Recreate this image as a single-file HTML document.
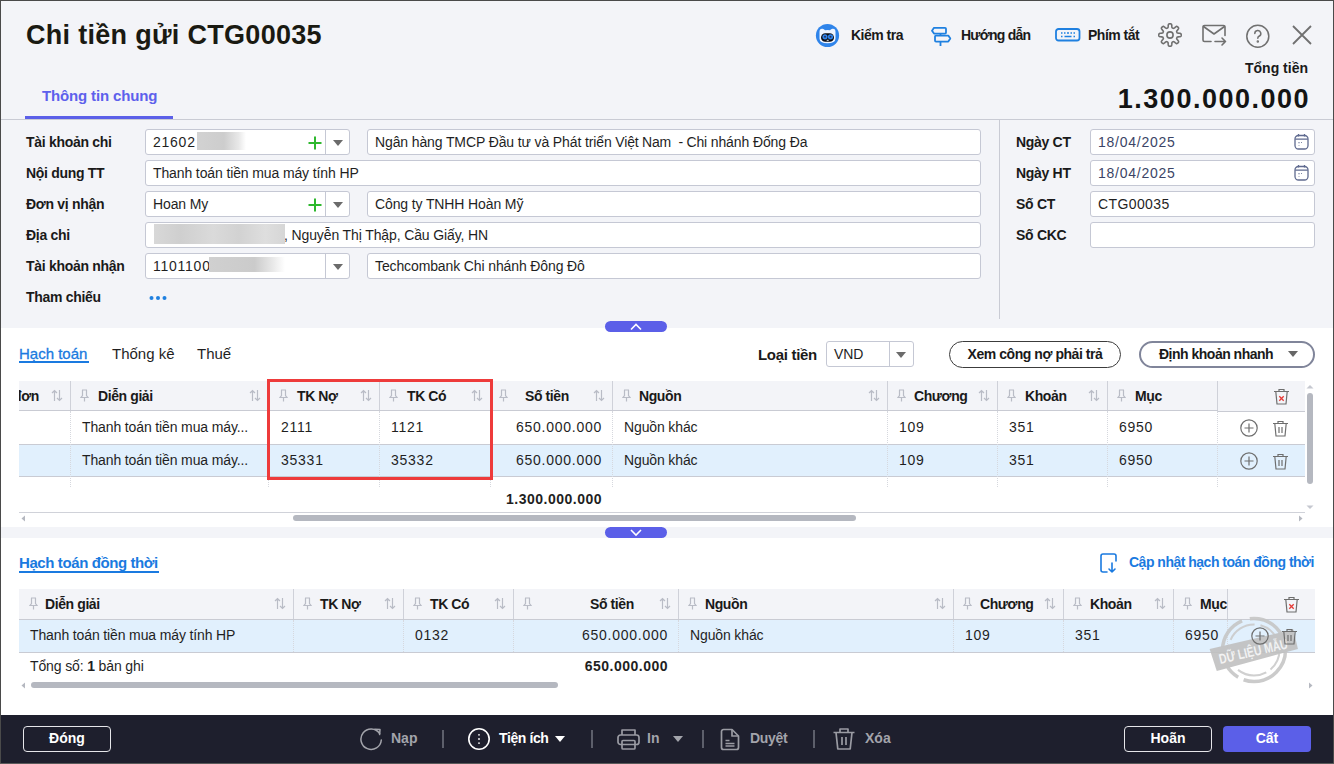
<!DOCTYPE html>
<html><head><meta charset="utf-8">
<style>
*{box-sizing:border-box;margin:0;padding:0}
html,body{width:1334px;height:764px;overflow:hidden;background:#fff}
body{font-family:"Liberation Sans",sans-serif;color:#1c1c1c;position:relative;font-size:14px}
.a{position:absolute;white-space:nowrap}
.b{font-weight:bold}
.inp{position:absolute;background:#fff;border:1px solid #c5c8d4;border-radius:3px;height:26px}
.it{position:absolute;top:4px;left:7px;font-size:14px;letter-spacing:-.12px;color:#1f1f1f;white-space:nowrap}
.lbl{position:absolute;font-weight:bold;font-size:14px;letter-spacing:-.3px;color:#1a1a1a;white-space:nowrap}
.tri{position:absolute;width:0;height:0;border-left:5px solid transparent;border-right:5px solid transparent;border-top:6px solid #6b6b6b}
.hd{position:absolute;font-weight:bold;font-size:14px;letter-spacing:-.4px;color:#1a1a1a;white-space:nowrap}
.cell{position:absolute;font-size:14px;letter-spacing:-.13px;color:#1f1f1f;white-space:nowrap}
.vsep{position:absolute;width:1px;background:#cfd1d9}
.dsep{position:absolute;width:0;border-left:1px dotted #d6d8de}
.hsep{position:absolute;height:1px;background:#c9cbd3}
</style></head>
<body>
<!-- window background -->
<div class="a" style="left:0;top:0;width:1334px;height:328px;background:#f3f4f8"></div>
<div class="a" style="left:0;top:527px;width:1334px;height:11px;background:#f3f4f8"></div>
<!-- footer -->
<div class="a" style="left:0;top:715px;width:1334px;height:49px;background:#1e1f2d"></div>

<!-- borders -->
<div class="a" style="left:0;top:0;width:1334px;height:1px;background:#4a4a4a"></div>
<div class="a" style="left:0;top:0;width:1px;height:764px;background:#4a4a4a"></div>
<div class="a" style="left:1333px;top:0;width:1px;height:764px;background:#4a4a4a"></div>
<div class="a" style="left:0;top:763px;width:1334px;height:1px;background:#5a5a5a"></div>

<!-- HEADER -->
<div class="a b" style="left:26px;top:20px;font-size:27px;color:#1a1a12;letter-spacing:.3px">Chi tiền gửi CTG00035</div>


<!-- header icons -->
<svg class="a" style="left:815px;top:23px" width="25" height="25" viewBox="0 0 25 25">
 <circle cx="12.5" cy="12.5" r="11.6" fill="#2f84ea"/>
 <path d="M4.5 9 Q4.5 5.5 7.5 5.8 Q9 6 10 7.2 Q12.5 6.6 15 7.2 Q16 6 17.5 5.8 Q20.5 5.5 20.5 9 L20.5 15.5 Q20.5 20.3 12.5 20.3 Q4.5 20.3 4.5 15.5 Z" fill="#eef4ff"/>
 <rect x="6" y="10.2" width="13" height="8.6" rx="4.3" fill="#0b0d14"/>
 <circle cx="10" cy="13.8" r="2.6" fill="#2f84ea"/><circle cx="15.5" cy="13.8" r="2.6" fill="#2f84ea"/>
 <circle cx="10" cy="13.8" r="1" fill="#2a2f5a"/><circle cx="15.5" cy="13.8" r="1" fill="#2a2f5a"/>
 <rect x="11.7" y="16.8" width="2" height="1" fill="#dfe8f5"/>
</svg>
<div class="a b" style="left:851px;top:27px;font-size:14px;color:#1a1a1a;letter-spacing:-0.5px">Kiểm tra</div>
<svg class="a" style="left:931px;top:26px" width="21" height="21" viewBox="0 0 21 21" fill="none" stroke="#1f80e0" stroke-width="1.8" stroke-linejoin="round">
 <path d="M3 1.8 H14 a1 1 0 0 1 1 1 V6.6 a1 1 0 0 1 -1 1 H3 L1 4.7 Z"/><path d="M5 9.6 H17.3 L19.3 12.6 L17.3 15.6 H5 a1 1 0 0 1 -1 -1 V10.6 a1 1 0 0 1 1 -1 Z"/><path d="M9.5 7.6 V9.6 M9.5 15.6 V20"/>
</svg>
<div class="a b" style="left:961px;top:27px;font-size:14px;color:#1a1a1a;letter-spacing:-0.75px">Hướng dẫn</div>
<svg class="a" style="left:1055px;top:28px" width="26" height="14" viewBox="0 0 26 14" fill="none">
 <rect x="1" y="1" width="23.5" height="11.5" rx="2.5" stroke="#1f80e0" stroke-width="1.8"/>
 <path d="M6 5h1.5M9 5h1.5M12 5h2M15.5 5h1.5M18.5 5h1.5M6 8.5h1.5M9.5 8.5h7M18.5 8.5h1.5" stroke="#1f80e0" stroke-width="1.4"/>
</svg>
<div class="a b" style="left:1088px;top:27px;font-size:14px;color:#1a1a1a;letter-spacing:-0.5px">Phím tắt</div>
<svg class="a" style="left:1158px;top:23px" width="24" height="24" viewBox="0 0 24 24" fill="none" stroke="#6f6f6f" stroke-width="1.6" stroke-linejoin="round"><path d="M12.00 0.80 L12.35 0.81 L12.70 0.86 L13.04 0.95 L13.37 1.18 L13.63 1.68 L13.79 2.60 L13.86 3.67 L13.96 4.38 L14.11 4.73 L14.31 4.90 L14.51 5.02 L14.72 5.12 L14.94 5.21 L15.16 5.29 L15.39 5.35 L15.65 5.36 L16.01 5.22 L16.58 4.79 L17.38 4.09 L18.14 3.54 L18.69 3.38 L19.07 3.45 L19.38 3.62 L19.66 3.84 L19.92 4.08 L20.16 4.34 L20.38 4.62 L20.55 4.93 L20.62 5.31 L20.46 5.86 L19.91 6.62 L19.21 7.42 L18.78 7.99 L18.64 8.35 L18.65 8.61 L18.71 8.84 L18.79 9.06 L18.88 9.28 L18.98 9.49 L19.10 9.69 L19.27 9.89 L19.62 10.04 L20.33 10.14 L21.40 10.21 L22.32 10.37 L22.82 10.63 L23.05 10.96 L23.14 11.30 L23.19 11.65 L23.20 12.00 L23.19 12.35 L23.14 12.70 L23.05 13.04 L22.82 13.37 L22.32 13.63 L21.40 13.79 L20.33 13.86 L19.62 13.96 L19.27 14.11 L19.10 14.31 L18.98 14.51 L18.88 14.72 L18.79 14.94 L18.71 15.16 L18.65 15.39 L18.64 15.65 L18.78 16.01 L19.21 16.58 L19.91 17.38 L20.46 18.14 L20.62 18.69 L20.55 19.07 L20.38 19.38 L20.16 19.66 L19.92 19.92 L19.66 20.16 L19.38 20.38 L19.07 20.55 L18.69 20.62 L18.14 20.46 L17.38 19.91 L16.58 19.21 L16.01 18.78 L15.65 18.64 L15.39 18.65 L15.16 18.71 L14.94 18.79 L14.72 18.88 L14.51 18.98 L14.31 19.10 L14.11 19.27 L13.96 19.62 L13.86 20.33 L13.79 21.40 L13.63 22.32 L13.37 22.82 L13.04 23.05 L12.70 23.14 L12.35 23.19 L12.00 23.20 L11.65 23.19 L11.30 23.14 L10.96 23.05 L10.63 22.82 L10.37 22.32 L10.21 21.40 L10.14 20.33 L10.04 19.62 L9.89 19.27 L9.69 19.10 L9.49 18.98 L9.28 18.88 L9.06 18.79 L8.84 18.71 L8.61 18.65 L8.35 18.64 L7.99 18.78 L7.42 19.21 L6.62 19.91 L5.86 20.46 L5.31 20.62 L4.93 20.55 L4.62 20.38 L4.34 20.16 L4.08 19.92 L3.84 19.66 L3.62 19.38 L3.45 19.07 L3.38 18.69 L3.54 18.14 L4.09 17.38 L4.79 16.58 L5.22 16.01 L5.36 15.65 L5.35 15.39 L5.29 15.16 L5.21 14.94 L5.12 14.72 L5.02 14.51 L4.90 14.31 L4.73 14.11 L4.38 13.96 L3.67 13.86 L2.60 13.79 L1.68 13.63 L1.18 13.37 L0.95 13.04 L0.86 12.70 L0.81 12.35 L0.80 12.00 L0.81 11.65 L0.86 11.30 L0.95 10.96 L1.18 10.63 L1.68 10.37 L2.60 10.21 L3.67 10.14 L4.38 10.04 L4.73 9.89 L4.90 9.69 L5.02 9.49 L5.12 9.28 L5.21 9.06 L5.29 8.84 L5.35 8.61 L5.36 8.35 L5.22 7.99 L4.79 7.42 L4.09 6.62 L3.54 5.86 L3.38 5.31 L3.45 4.93 L3.62 4.62 L3.84 4.34 L4.08 4.08 L4.34 3.84 L4.62 3.62 L4.93 3.45 L5.31 3.38 L5.86 3.54 L6.62 4.09 L7.42 4.79 L7.99 5.22 L8.35 5.36 L8.61 5.35 L8.84 5.29 L9.06 5.21 L9.28 5.12 L9.49 5.02 L9.69 4.90 L9.89 4.73 L10.04 4.38 L10.14 3.67 L10.21 2.60 L10.37 1.68 L10.63 1.18 L10.96 0.95 L11.30 0.86 L11.65 0.81Z"/><circle cx="12" cy="12" r="3.1"/></svg>
<svg class="a" style="left:1201px;top:24px" width="27" height="24" viewBox="0 0 27 24" fill="none" stroke="#707070" stroke-width="1.6" stroke-linecap="round" stroke-linejoin="round">
 <path d="M10 17.5H3.5a1.5 1.5 0 0 1-1.5-1.5V3a1.5 1.5 0 0 1 1.5-1.5h19a1.5 1.5 0 0 1 1.5 1.5v8.5"/>
 <path d="M2.5 2.5l10.5 7.5 10.5-7.5"/><path d="M14 17.5h10.5M21 14l3.5 3.5-3.5 3.5"/>
</svg>
<svg class="a" style="left:1245px;top:24px" width="26" height="25" viewBox="0 0 26 25" fill="none" stroke="#707070" stroke-width="1.5" stroke-linecap="round">
 <circle cx="12.8" cy="12.3" r="11"/>
 <path d="M9.8 9.5a3 3 0 1 1 4.2 2.8c-.9.4-1.2 1-1.2 2"/><circle cx="12.8" cy="17.5" r=".5" fill="#707070"/>
</svg>
<svg class="a" style="left:1291px;top:24px" width="22" height="22" viewBox="0 0 22 22" stroke="#707070" stroke-width="1.8">
 <path d="M2 2L20 20M20 2L2 20"/>
</svg>
<div class="a b" style="right:26px;top:60px;font-size:14px;color:#1a1a1a">Tổng tiền</div>
<div class="a b" style="right:24px;top:84px;font-size:27px;color:#141414;letter-spacing:1.5px">1.300.000.000</div>

<!-- tab -->
<div class="a b" style="left:42px;top:87px;font-size:15px;color:#5d60ec;letter-spacing:-.15px">Thông tin chung</div>
<div class="a" style="left:25px;top:116px;width:148px;height:3px;background:#5b5fe8"></div>
<div class="a" style="left:1px;top:119px;width:1332px;height:1px;background:#c9cbd4"></div>
<div class="a" style="left:999px;top:120px;width:1px;height:199px;background:#c9cbd4"></div>

<!-- FORM -->
<div class="lbl" style="left:26px;top:134px">Tài khoản chi</div>
<div class="lbl" style="left:26px;top:165px">Nội dung TT</div>
<div class="lbl" style="left:26px;top:196px">Đơn vị nhận</div>
<div class="lbl" style="left:26px;top:227px">Địa chi</div>
<div class="lbl" style="left:26px;top:258px">Tài khoản nhận</div>
<div class="lbl" style="left:26px;top:289px">Tham chiếu</div>
<div class="inp" style="left:145px;top:129px;width:205px"><div class="it" style="letter-spacing:.75px">21602</div><svg class="a" style="left:162px;top:6px" width="14" height="14" viewBox="0 0 14 14" stroke="#2eb82e" stroke-width="2"><path d="M7 0.5V13.5M0.5 7H13.5"/></svg><div class="a" style="left:179px;top:0;width:1px;height:24px;background:#c5c8d4"></div><div class="tri" style="left:187px;top:10px"></div></div>
<div class="a" style="left:197px;top:132px;width:49px;height:18px;background:linear-gradient(90deg,#d2d2d2 0%,#cdcdcd 55%,#e8e8e8 85%,#fff 100%)"></div>
<div class="inp" style="left:367px;top:129px;width:614px"><div class="it">Ngân hàng TMCP Đầu tư và Phát triển <span style="letter-spacing:-.2px">Việt Nam&nbsp; - Chi</span> nhánh Đống Đa</div></div>
<div class="inp" style="left:145px;top:160px;width:836px"><div class="it">Thanh toán tiền mua máy tính HP</div></div>
<div class="inp" style="left:145px;top:191px;width:205px"><div class="it">Hoan My</div><svg class="a" style="left:162px;top:6px" width="14" height="14" viewBox="0 0 14 14" stroke="#2eb82e" stroke-width="2"><path d="M7 0.5V13.5M0.5 7H13.5"/></svg><div class="a" style="left:179px;top:0;width:1px;height:24px;background:#c5c8d4"></div><div class="tri" style="left:187px;top:10px"></div></div>
<div class="inp" style="left:367px;top:191px;width:614px"><div class="it">Công ty TNHH Hoàn Mỹ</div></div>
<div class="inp" style="left:145px;top:222px;width:836px"><div class="it"><span style="display:inline-block;width:131px"></span>, Nguyễn Thị Thập, Cầu Giấy, HN</div></div>
<div class="a" style="left:154px;top:224px;width:131px;height:20px;background:linear-gradient(90deg,#d8d8d8,#cfcfcf 20%,#dadada 45%,#d2d2d2 65%,#dedede 85%,#d6d6d6)"></div>
<div class="inp" style="left:145px;top:253px;width:205px"><div class="it" style="letter-spacing:.75px">1101100</div><div class="a" style="left:179px;top:0;width:1px;height:24px;background:#c5c8d4"></div><div class="tri" style="left:187px;top:10px"></div></div>
<div class="a" style="left:209px;top:257px;width:76px;height:15px;background:linear-gradient(90deg,#d0d0d0 0%,#cbcbcb 60%,#e6e6e6 82%,#fff 100%)"></div>
<div class="inp" style="left:367px;top:253px;width:614px"><div class="it">Techcombank Chi nhánh Đông Đô</div></div>
<svg class="a" style="left:149px;top:294px" width="20" height="8" viewBox="0 0 20 8" fill="#1f80e0"><circle cx="2.5" cy="4" r="2"/><circle cx="9" cy="4" r="2"/><circle cx="15.5" cy="4" r="2"/></svg>
<div class="lbl" style="left:1016px;top:134px">Ngày CT</div>
<div class="lbl" style="left:1016px;top:165px">Ngày HT</div>
<div class="lbl" style="left:1016px;top:196px">Số CT</div>
<div class="lbl" style="left:1016px;top:227px">Số CKC</div>
<div class="inp" style="left:1090px;top:129px;width:225px"><div class="it" style="color:#3b4466;letter-spacing:.75px">18/04/2025</div><svg class="a" style="left:203px;top:3px" width="16" height="17" viewBox="0 0 16 17" fill="none" stroke="#5f6a8f" stroke-width="1.3"><rect x="1" y="2.5" width="13" height="13.5" rx="3.5"/><path d="M1.2 6.2H13.8M4.5 1v2.5M10.5 1v2.5"/><path d="M5 9v1.3M5 12v.6M7.5 9v.8" stroke-width="1"/></svg></div>
<div class="inp" style="left:1090px;top:160px;width:225px"><div class="it" style="color:#3b4466;letter-spacing:.75px">18/04/2025</div><svg class="a" style="left:203px;top:3px" width="16" height="17" viewBox="0 0 16 17" fill="none" stroke="#5f6a8f" stroke-width="1.3"><rect x="1" y="2.5" width="13" height="13.5" rx="3.5"/><path d="M1.2 6.2H13.8M4.5 1v2.5M10.5 1v2.5"/><path d="M5 9v1.3M5 12v.6M7.5 9v.8" stroke-width="1"/></svg></div>
<div class="inp" style="left:1090px;top:191px;width:225px"><div class="it" style="letter-spacing:.4px">CTG00035</div></div>
<div class="inp" style="left:1090px;top:222px;width:225px"><div class="it"></div></div>

<!-- MIDDLE -->
<div class="a" style="left:605px;top:321px;width:62px;height:11px;border-radius:6px;background:#5b5fe8"></div><svg class="a" style="left:629px;top:322px" width="14" height="9" viewBox="0 0 14 9" fill="none" stroke="#fff" stroke-width="1.6"><path d="M2 7.5L7 2.5L12 7.5"/></svg>
<div class="a" style="left:19px;top:345px;font-size:15px;color:#1a7ae0;-webkit-text-stroke:.3px #1a7ae0">Hạch toán</div><div class="a" style="left:19px;top:361px;width:70px;height:1.5px;background:#1a7ae0"></div><div class="a" style="left:112px;top:345px;font-size:15px;color:#1f1f1f">Thống kê</div><div class="a" style="left:197px;top:345px;font-size:15px;color:#1f1f1f">Thuế</div>
<div class="lbl" style="left:758px;top:346px;font-size:15px">Loại tiền</div><div class="inp" style="left:826px;top:341px;width:88px"><div class="it">VND</div><div class="a" style="left:62px;top:0;width:1px;height:24px;background:#c5c8d4"></div><div class="tri" style="left:69px;top:10px"></div></div>
<div class="a" style="left:949px;top:341px;width:172px;height:27px;border:1px solid #3c3c3c;border-radius:14px;background:#fff"></div><div class="a b" style="left:949px;top:346px;width:172px;text-align:center;font-size:14px;color:#1a1a1a;letter-spacing:-.45px">Xem công nợ phải trả</div>
<div class="a" style="left:1139px;top:341px;width:176px;height:27px;border:2px solid #80859a;border-radius:14px;background:#fff"></div><div class="a b" style="left:1159px;top:346px;font-size:14px;color:#1a1a1a;letter-spacing:-.5px">Định khoản nhanh</div><div class="tri" style="left:1288px;top:351px;border-top-color:#666"></div>
<div class="a" style="left:19px;top:381px;width:1286px;height:30px;background:#f3f4f8"></div><div class="hsep" style="left:19px;top:410px;width:1286px"></div><div class="a" style="left:19px;top:411px;width:1286px;height:33px;background:#fff"></div><div class="hsep" style="left:19px;top:444px;width:1286px"></div><div class="a" style="left:19px;top:445px;width:1286px;height:31px;background:#e1f0fd"></div><div class="hsep" style="left:19px;top:476px;width:1286px"></div>
<div class="vsep" style="left:70px;top:381px;height:29px"></div><div class="dsep" style="left:70px;top:411px;height:76px"></div><div class="vsep" style="left:268px;top:381px;height:29px"></div><div class="dsep" style="left:268px;top:411px;height:76px"></div><div class="vsep" style="left:379px;top:381px;height:29px"></div><div class="dsep" style="left:379px;top:411px;height:76px"></div><div class="vsep" style="left:490px;top:381px;height:29px"></div><div class="dsep" style="left:490px;top:411px;height:76px"></div><div class="vsep" style="left:612px;top:381px;height:29px"></div><div class="dsep" style="left:612px;top:411px;height:76px"></div><div class="vsep" style="left:887px;top:381px;height:29px"></div><div class="dsep" style="left:887px;top:411px;height:76px"></div><div class="vsep" style="left:997px;top:381px;height:29px"></div><div class="dsep" style="left:997px;top:411px;height:76px"></div><div class="vsep" style="left:1107px;top:381px;height:29px"></div><div class="dsep" style="left:1107px;top:411px;height:76px"></div><div class="vsep" style="left:1217px;top:381px;height:29px"></div><div class="dsep" style="left:1217px;top:411px;height:76px"></div>
<div class="a" style="left:19px;top:381px;width:40px;height:29px;overflow:hidden"><div class="hd" style="left:-6px;top:7px">đơn</div></div><svg class="a" style="left:80px;top:389px" width="9" height="13" viewBox="0 0 9 13" fill="none" stroke="#b9bcc6" stroke-width="1.2"><path d="M2 1h5M2.5 1v5.5L1 8.5h7L6.5 6.5V1M4.5 8.5V12.5"/></svg><div class="hd" style="left:98px;top:387.5px">Diễn giải</div><svg class="a" style="left:279px;top:389px" width="9" height="13" viewBox="0 0 9 13" fill="none" stroke="#b9bcc6" stroke-width="1.2"><path d="M2 1h5M2.5 1v5.5L1 8.5h7L6.5 6.5V1M4.5 8.5V12.5"/></svg><div class="hd" style="left:297px;top:387.5px">TK Nợ</div><svg class="a" style="left:389px;top:389px" width="9" height="13" viewBox="0 0 9 13" fill="none" stroke="#b9bcc6" stroke-width="1.2"><path d="M2 1h5M2.5 1v5.5L1 8.5h7L6.5 6.5V1M4.5 8.5V12.5"/></svg><div class="hd" style="left:407px;top:387.5px">TK Có</div><svg class="a" style="left:499px;top:389px" width="9" height="13" viewBox="0 0 9 13" fill="none" stroke="#b9bcc6" stroke-width="1.2"><path d="M2 1h5M2.5 1v5.5L1 8.5h7L6.5 6.5V1M4.5 8.5V12.5"/></svg><div class="hd" style="left:525px;top:387.5px">Số tiền</div><svg class="a" style="left:622px;top:389px" width="9" height="13" viewBox="0 0 9 13" fill="none" stroke="#b9bcc6" stroke-width="1.2"><path d="M2 1h5M2.5 1v5.5L1 8.5h7L6.5 6.5V1M4.5 8.5V12.5"/></svg><div class="hd" style="left:639px;top:387.5px">Nguồn</div><svg class="a" style="left:897px;top:389px" width="9" height="13" viewBox="0 0 9 13" fill="none" stroke="#b9bcc6" stroke-width="1.2"><path d="M2 1h5M2.5 1v5.5L1 8.5h7L6.5 6.5V1M4.5 8.5V12.5"/></svg><div class="hd" style="left:914px;top:387.5px">Chương</div><svg class="a" style="left:1007px;top:389px" width="9" height="13" viewBox="0 0 9 13" fill="none" stroke="#b9bcc6" stroke-width="1.2"><path d="M2 1h5M2.5 1v5.5L1 8.5h7L6.5 6.5V1M4.5 8.5V12.5"/></svg><div class="hd" style="left:1025px;top:387.5px">Khoản</div><svg class="a" style="left:1117px;top:389px" width="9" height="13" viewBox="0 0 9 13" fill="none" stroke="#b9bcc6" stroke-width="1.2"><path d="M2 1h5M2.5 1v5.5L1 8.5h7L6.5 6.5V1M4.5 8.5V12.5"/></svg><div class="hd" style="left:1135px;top:387.5px">Mục</div><svg class="a" style="left:51px;top:389px" width="12" height="13" viewBox="0 0 12 13" fill="none" stroke="#b9bcc6" stroke-width="1.2"><path d="M3.5 12V1.5M1 4l2.5-2.5L6 4M8.5 1v10.5M6 9l2.5 2.5L11 9"/></svg><svg class="a" style="left:249px;top:389px" width="12" height="13" viewBox="0 0 12 13" fill="none" stroke="#b9bcc6" stroke-width="1.2"><path d="M3.5 12V1.5M1 4l2.5-2.5L6 4M8.5 1v10.5M6 9l2.5 2.5L11 9"/></svg><svg class="a" style="left:360px;top:389px" width="12" height="13" viewBox="0 0 12 13" fill="none" stroke="#b9bcc6" stroke-width="1.2"><path d="M3.5 12V1.5M1 4l2.5-2.5L6 4M8.5 1v10.5M6 9l2.5 2.5L11 9"/></svg><svg class="a" style="left:471px;top:389px" width="12" height="13" viewBox="0 0 12 13" fill="none" stroke="#b9bcc6" stroke-width="1.2"><path d="M3.5 12V1.5M1 4l2.5-2.5L6 4M8.5 1v10.5M6 9l2.5 2.5L11 9"/></svg><svg class="a" style="left:593px;top:389px" width="12" height="13" viewBox="0 0 12 13" fill="none" stroke="#b9bcc6" stroke-width="1.2"><path d="M3.5 12V1.5M1 4l2.5-2.5L6 4M8.5 1v10.5M6 9l2.5 2.5L11 9"/></svg><svg class="a" style="left:868px;top:389px" width="12" height="13" viewBox="0 0 12 13" fill="none" stroke="#b9bcc6" stroke-width="1.2"><path d="M3.5 12V1.5M1 4l2.5-2.5L6 4M8.5 1v10.5M6 9l2.5 2.5L11 9"/></svg><svg class="a" style="left:978px;top:389px" width="12" height="13" viewBox="0 0 12 13" fill="none" stroke="#b9bcc6" stroke-width="1.2"><path d="M3.5 12V1.5M1 4l2.5-2.5L6 4M8.5 1v10.5M6 9l2.5 2.5L11 9"/></svg><svg class="a" style="left:1088px;top:389px" width="12" height="13" viewBox="0 0 12 13" fill="none" stroke="#b9bcc6" stroke-width="1.2"><path d="M3.5 12V1.5M1 4l2.5-2.5L6 4M8.5 1v10.5M6 9l2.5 2.5L11 9"/></svg><svg class="a" style="left:1273px;top:388px" width="17" height="17" viewBox="0 0 17 17" fill="none" stroke="#6e6e6e" stroke-width="1.2"><path d="M1 3.5h15M6 3.5V1.5h5v2M2.8 3.5l1.2 12.5h9l1.2-12.5"/><path d="M6.3 8.3l4.4 4.4M10.7 8.3l-4.4 4.4" stroke="#e53935" stroke-width="1.3"/></svg>
<div class="cell" style="left:82px;top:419px">Thanh toán tiền mua máy...</div><div class="cell" style="left:281px;top:419px;letter-spacing:.75px">2111</div><div class="cell" style="left:391px;top:419px;letter-spacing:.75px">1121</div><div class="cell" style="right:732px;top:419px;letter-spacing:.75px">650.000.000</div><div class="cell" style="left:624px;top:419px">Nguồn khác</div><div class="cell" style="left:899px;top:419px;letter-spacing:.75px">109</div><div class="cell" style="left:1009px;top:419px;letter-spacing:.75px">351</div><div class="cell" style="left:1119px;top:419px;letter-spacing:.75px">6950</div><svg class="a" style="left:1240px;top:419px" width="18" height="18" viewBox="0 0 18 18" fill="none" stroke="#6e6e6e" stroke-width="1.2"><circle cx="9" cy="9" r="8.2"/><path d="M9 4.5v9M4.5 9h9"/></svg><svg class="a" style="left:1272px;top:420px" width="17" height="17" viewBox="0 0 17 17" fill="none" stroke="#6e6e6e" stroke-width="1.2"><path d="M1 3.5h15M6 3.5V1.5h5v2M2.8 3.5l1.2 12.5h9l1.2-12.5"/><path d="M7 7v6M10 7v6"/></svg>
<div class="cell" style="left:82px;top:452px">Thanh toán tiền mua máy...</div><div class="cell" style="left:281px;top:452px;letter-spacing:.75px">35331</div><div class="cell" style="left:391px;top:452px;letter-spacing:.75px">35332</div><div class="cell" style="right:732px;top:452px;letter-spacing:.75px">650.000.000</div><div class="cell" style="left:624px;top:452px">Nguồn khác</div><div class="cell" style="left:899px;top:452px;letter-spacing:.75px">109</div><div class="cell" style="left:1009px;top:452px;letter-spacing:.75px">351</div><div class="cell" style="left:1119px;top:452px;letter-spacing:.75px">6950</div><svg class="a" style="left:1240px;top:452px" width="18" height="18" viewBox="0 0 18 18" fill="none" stroke="#6e6e6e" stroke-width="1.2"><circle cx="9" cy="9" r="8.2"/><path d="M9 4.5v9M4.5 9h9"/></svg><svg class="a" style="left:1272px;top:453px" width="17" height="17" viewBox="0 0 17 17" fill="none" stroke="#6e6e6e" stroke-width="1.2"><path d="M1 3.5h15M6 3.5V1.5h5v2M2.8 3.5l1.2 12.5h9l1.2-12.5"/><path d="M7 7v6M10 7v6"/></svg>
<div class="a" style="left:1218px;top:410px;width:87px;height:1px;background:#f3f4f8"></div><div class="hsep" style="left:1218px;top:411px;width:87px"></div>
<div class="a" style="left:267px;top:379px;width:226px;height:101px;border:3px solid #ee3b3b"></div>
<div class="cell b" style="right:732px;top:491px;letter-spacing:.5px">1.300.000.000</div><div class="hsep" style="left:19px;top:512px;width:1286px;background:#d0d2d9"></div><div class="a" style="left:293px;top:515px;width:563px;height:6px;border-radius:3px;background:#b5b8c0"></div><svg class="a" style="left:21px;top:515px" width="5" height="7"><path d="M4 0.5V6.5L0.5 3.5Z" fill="#b5b8c0"/></svg><svg class="a" style="left:1298px;top:515px" width="5" height="7"><path d="M1 0.5V6.5L4.5 3.5Z" fill="#b5b8c0"/></svg><div class="a" style="left:1307px;top:393px;width:6px;height:91px;border-radius:3px;background:#b5b8c0"></div><svg class="a" style="left:1306px;top:384px" width="8" height="5"><path d="M0.5 4.5H7.5L4 1Z" fill="#c5c8d0"/></svg><svg class="a" style="left:1306px;top:505px" width="8" height="5"><path d="M0.5 0.5H7.5L4 4Z" fill="#c5c8d0"/></svg>
<div class="a" style="left:605px;top:527px;width:62px;height:11px;border-radius:6px;background:#5b5fe8"></div><svg class="a" style="left:629px;top:528px" width="14" height="9" viewBox="0 0 14 9" fill="none" stroke="#fff" stroke-width="1.6"><path d="M2 2L7 7L12 2"/></svg>

<!-- BOTTOM -->
<div class="a" style="left:19px;top:554px;font-size:15px;color:#1a7ae0;font-weight:bold;letter-spacing:-.4px">Hạch toán đồng thời</div><div class="a" style="left:19px;top:571px;width:140px;height:1.5px;background:#1a7ae0"></div>
<svg class="a" style="left:1100px;top:553px" width="19" height="21" viewBox="0 0 19 21" fill="none" stroke="#1a7ae0" stroke-width="1.6" stroke-linecap="round" stroke-linejoin="round"><path d="M7 19H3a2 2 0 0 1-2-2V3a2 2 0 0 1 2-2h11a2 2 0 0 1 2 2v5"/><path d="M12 10v9M9 16l3 3 3-3"/></svg><div class="a b" style="left:1129px;top:554px;font-size:14px;color:#1a7ae0;letter-spacing:-.5px">Cập nhật hạch toán đồng thời</div>
<div class="a" style="left:19px;top:589px;width:1296px;height:30px;background:#f3f4f8"></div><div class="hsep" style="left:19px;top:619px;width:1296px"></div><div class="a" style="left:19px;top:620px;width:1296px;height:32px;background:#e1f0fd"></div><div class="hsep" style="left:19px;top:652px;width:1296px"></div>
<div class="vsep" style="left:293px;top:589px;height:30px"></div><div class="dsep" style="left:293px;top:620px;height:32px"></div><div class="vsep" style="left:403px;top:589px;height:30px"></div><div class="dsep" style="left:403px;top:620px;height:32px"></div><div class="vsep" style="left:513px;top:589px;height:30px"></div><div class="dsep" style="left:513px;top:620px;height:32px"></div><div class="vsep" style="left:678px;top:589px;height:30px"></div><div class="dsep" style="left:678px;top:620px;height:32px"></div><div class="vsep" style="left:953px;top:589px;height:30px"></div><div class="dsep" style="left:953px;top:620px;height:32px"></div><div class="vsep" style="left:1063px;top:589px;height:30px"></div><div class="dsep" style="left:1063px;top:620px;height:32px"></div><div class="vsep" style="left:1173px;top:589px;height:30px"></div><div class="dsep" style="left:1173px;top:620px;height:32px"></div><div class="vsep" style="left:1227px;top:589px;height:30px"></div><div class="dsep" style="left:1227px;top:620px;height:32px"></div><svg class="a" style="left:29px;top:597px" width="9" height="13" viewBox="0 0 9 13" fill="none" stroke="#b9bcc6" stroke-width="1.2"><path d="M2 1h5M2.5 1v5.5L1 8.5h7L6.5 6.5V1M4.5 8.5V12.5"/></svg><div class="hd" style="left:45px;top:595.5px">Diễn giải</div><svg class="a" style="left:303px;top:597px" width="9" height="13" viewBox="0 0 9 13" fill="none" stroke="#b9bcc6" stroke-width="1.2"><path d="M2 1h5M2.5 1v5.5L1 8.5h7L6.5 6.5V1M4.5 8.5V12.5"/></svg><div class="hd" style="left:320px;top:595.5px">TK Nợ</div><svg class="a" style="left:413px;top:597px" width="9" height="13" viewBox="0 0 9 13" fill="none" stroke="#b9bcc6" stroke-width="1.2"><path d="M2 1h5M2.5 1v5.5L1 8.5h7L6.5 6.5V1M4.5 8.5V12.5"/></svg><div class="hd" style="left:430px;top:595.5px">TK Có</div><svg class="a" style="left:523px;top:597px" width="9" height="13" viewBox="0 0 9 13" fill="none" stroke="#b9bcc6" stroke-width="1.2"><path d="M2 1h5M2.5 1v5.5L1 8.5h7L6.5 6.5V1M4.5 8.5V12.5"/></svg><div class="hd" style="left:590px;top:595.5px">Số tiền</div><svg class="a" style="left:688px;top:597px" width="9" height="13" viewBox="0 0 9 13" fill="none" stroke="#b9bcc6" stroke-width="1.2"><path d="M2 1h5M2.5 1v5.5L1 8.5h7L6.5 6.5V1M4.5 8.5V12.5"/></svg><div class="hd" style="left:705px;top:595.5px">Nguồn</div><svg class="a" style="left:963px;top:597px" width="9" height="13" viewBox="0 0 9 13" fill="none" stroke="#b9bcc6" stroke-width="1.2"><path d="M2 1h5M2.5 1v5.5L1 8.5h7L6.5 6.5V1M4.5 8.5V12.5"/></svg><div class="hd" style="left:980px;top:595.5px">Chương</div><svg class="a" style="left:1073px;top:597px" width="9" height="13" viewBox="0 0 9 13" fill="none" stroke="#b9bcc6" stroke-width="1.2"><path d="M2 1h5M2.5 1v5.5L1 8.5h7L6.5 6.5V1M4.5 8.5V12.5"/></svg><div class="hd" style="left:1090px;top:595.5px">Khoản</div><svg class="a" style="left:1183px;top:597px" width="9" height="13" viewBox="0 0 9 13" fill="none" stroke="#b9bcc6" stroke-width="1.2"><path d="M2 1h5M2.5 1v5.5L1 8.5h7L6.5 6.5V1M4.5 8.5V12.5"/></svg><div class="hd" style="left:1200px;top:595.5px">Mục</div><svg class="a" style="left:274px;top:597px" width="12" height="13" viewBox="0 0 12 13" fill="none" stroke="#b9bcc6" stroke-width="1.2"><path d="M3.5 12V1.5M1 4l2.5-2.5L6 4M8.5 1v10.5M6 9l2.5 2.5L11 9"/></svg><svg class="a" style="left:384px;top:597px" width="12" height="13" viewBox="0 0 12 13" fill="none" stroke="#b9bcc6" stroke-width="1.2"><path d="M3.5 12V1.5M1 4l2.5-2.5L6 4M8.5 1v10.5M6 9l2.5 2.5L11 9"/></svg><svg class="a" style="left:494px;top:597px" width="12" height="13" viewBox="0 0 12 13" fill="none" stroke="#b9bcc6" stroke-width="1.2"><path d="M3.5 12V1.5M1 4l2.5-2.5L6 4M8.5 1v10.5M6 9l2.5 2.5L11 9"/></svg><svg class="a" style="left:659px;top:597px" width="12" height="13" viewBox="0 0 12 13" fill="none" stroke="#b9bcc6" stroke-width="1.2"><path d="M3.5 12V1.5M1 4l2.5-2.5L6 4M8.5 1v10.5M6 9l2.5 2.5L11 9"/></svg><svg class="a" style="left:934px;top:597px" width="12" height="13" viewBox="0 0 12 13" fill="none" stroke="#b9bcc6" stroke-width="1.2"><path d="M3.5 12V1.5M1 4l2.5-2.5L6 4M8.5 1v10.5M6 9l2.5 2.5L11 9"/></svg><svg class="a" style="left:1044px;top:597px" width="12" height="13" viewBox="0 0 12 13" fill="none" stroke="#b9bcc6" stroke-width="1.2"><path d="M3.5 12V1.5M1 4l2.5-2.5L6 4M8.5 1v10.5M6 9l2.5 2.5L11 9"/></svg><svg class="a" style="left:1154px;top:597px" width="12" height="13" viewBox="0 0 12 13" fill="none" stroke="#b9bcc6" stroke-width="1.2"><path d="M3.5 12V1.5M1 4l2.5-2.5L6 4M8.5 1v10.5M6 9l2.5 2.5L11 9"/></svg><div class="a" style="left:1228px;top:589px;width:87px;height:30px;background:#f3f4f8"></div><svg class="a" style="left:1283px;top:596px" width="17" height="17" viewBox="0 0 17 17" fill="none" stroke="#6e6e6e" stroke-width="1.2"><path d="M1 3.5h15M6 3.5V1.5h5v2M2.8 3.5l1.2 12.5h9l1.2-12.5"/><path d="M6.3 8.3l4.4 4.4M10.7 8.3l-4.4 4.4" stroke="#e53935" stroke-width="1.3"/></svg>
<div class="cell" style="left:30px;top:627px">Thanh toán tiền mua máy tính HP</div><div class="cell" style="left:415px;top:627px;letter-spacing:.75px">0132</div><div class="cell" style="right:666px;top:627px;letter-spacing:.75px">650.000.000</div><div class="cell" style="left:690px;top:627px">Nguồn khác</div><div class="cell" style="left:965px;top:627px;letter-spacing:.75px">109</div><div class="cell" style="left:1075px;top:627px;letter-spacing:.75px">351</div><div class="cell" style="left:1185px;top:627px;letter-spacing:.75px">6950</div><svg class="a" style="left:1251px;top:627px;z-index:3" width="18" height="18" viewBox="0 0 18 18" fill="none" stroke="#6e6e6e" stroke-width="1.2"><circle cx="9" cy="9" r="8.2"/><path d="M9 4.5v9M4.5 9h9"/></svg><svg class="a" style="left:1281px;top:628px;z-index:3" width="17" height="17" viewBox="0 0 17 17" fill="none" stroke="#6e6e6e" stroke-width="1.2"><path d="M1 3.5h15M6 3.5V1.5h5v2M2.8 3.5l1.2 12.5h9l1.2-12.5"/><path d="M7 7v6M10 7v6"/></svg>
<div class="cell" style="left:30px;top:658px">Tổng số: <b>1</b> bản ghi</div><div class="cell b" style="right:666px;top:658px;letter-spacing:.5px">650.000.000</div><div class="a" style="left:31px;top:682px;width:527px;height:6px;border-radius:3px;background:#b5b8c0"></div><svg class="a" style="left:21px;top:682px" width="5" height="7"><path d="M4 0.5V6.5L0.5 3.5Z" fill="#b5b8c0"/></svg><svg class="a" style="left:1308px;top:682px" width="5" height="7"><path d="M1 0.5V6.5L4.5 3.5Z" fill="#b5b8c0"/></svg>
<svg class="a" style="left:1204px;top:600px;opacity:.9" width="100" height="100" viewBox="0 0 100 100">
 <g transform="translate(50,50)">
 <circle r="31.5" fill="none" stroke="#c6c6c6" stroke-width="3.5" stroke-dasharray="60 6 70 8"/>
 <circle r="25.5" fill="none" stroke="#cbcbcb" stroke-width="2" stroke-dasharray="22 5 30 6"/>
 <g transform="rotate(-13)"><path d="M-43 -11 L43 -11 L43 9 L-41 12 Z" fill="#c0c0c0"/>
 <text x="-36" y="6" font-family="Liberation Sans" font-weight="bold" font-size="14" fill="#f2f2f2" textLength="70" lengthAdjust="spacingAndGlyphs">DỮ LIỆU MẪU</text></g>
 </g></svg>



<!-- FOOTER -->
<div class="a" style="left:23px;top:726px;width:88px;height:26px;border:1.5px solid #e6e6ea;border-radius:4px"></div><div class="a b" style="left:23px;top:730px;width:88px;text-align:center;font-size:14px;color:#fff">Đóng</div>
<svg class="a" style="left:359px;top:727px" width="24" height="24" viewBox="0 0 24 24" fill="none" stroke="#a3a4ab" stroke-width="1.5" stroke-linecap="round" stroke-linejoin="round"><path d="M20.6 6.5A10.2 10.2 0 1 0 22.3 13"/><path d="M15.8 2.3L21 2.6L20.6 7.6"/></svg><div class="a b" style="left:391px;top:730px;font-size:14px;color:#a3a4ab">Nạp</div><div class="a" style="left:442px;top:730px;width:2px;height:18px;background:#5d5f6b"></div>
<svg class="a" style="left:467px;top:727px" width="24" height="24" viewBox="0 0 24 24" fill="none" stroke="#fff" stroke-width="1.6"><circle cx="12" cy="12" r="10.2"/><path d="M12 7.2v1.4M12 11.3v1.4M12 15.4v1.4" stroke-width="1.8"/></svg><div class="a b" style="left:499px;top:730px;font-size:14px;color:#fff;letter-spacing:-.4px">Tiện ích</div><div class="tri" style="left:555px;top:736px;border-top-color:#fff"></div><div class="a" style="left:591px;top:730px;width:2px;height:18px;background:#5d5f6b"></div>
<svg class="a" style="left:617px;top:728px" width="23" height="22" viewBox="0 0 23 22" fill="none" stroke="#9a9ba3" stroke-width="1.7" stroke-linejoin="round"><path d="M5 7V2h13v5"/><rect x="1" y="7" width="21" height="9.5" rx="2.5"/><rect x="5" y="12.5" width="13" height="8.5" rx="1"/></svg><div class="a b" style="left:647px;top:730px;font-size:14px;color:#a3a4ab">In</div><div class="tri" style="left:673px;top:736px;border-top-color:#a3a4ab"></div><div class="a" style="left:702px;top:730px;width:2px;height:18px;background:#5d5f6b"></div>
<svg class="a" style="left:720px;top:728px" width="20" height="23" viewBox="0 0 20 23" fill="none" stroke="#9a9ba3" stroke-width="1.7" stroke-linejoin="round"><path d="M12 1.5H3.5a2 2 0 0 0-2 2v16a2 2 0 0 0 2 2h13a2 2 0 0 0 2-2V8z"/><path d="M12 1.5V8h6.5"/><path d="M5.5 12.5h4M5.5 15.5h9M5.5 18h9"/></svg><div class="a b" style="left:750px;top:730px;font-size:14px;color:#a3a4ab;letter-spacing:-.3px">Duyệt</div><div class="a" style="left:813px;top:730px;width:2px;height:18px;background:#5d5f6b"></div>
<svg class="a" style="left:832px;top:727px" width="24" height="24" viewBox="0 0 24 24" fill="none" stroke="#9a9ba3" stroke-width="1.7" stroke-linejoin="round"><path d="M1.5 5.5h21M8 5.5V2h8v3.5M4 5.5l1.8 16.5h12.4L20 5.5"/><path d="M10 10v8M14 10v8"/></svg><div class="a b" style="left:865px;top:730px;font-size:14px;color:#a3a4ab">Xóa</div>
<div class="a" style="left:1124px;top:726px;width:88px;height:26px;border:1.5px solid #e6e6ea;border-radius:4px"></div><div class="a b" style="left:1124px;top:730px;width:88px;text-align:center;font-size:14px;color:#fff">Hoãn</div><div class="a" style="left:1223px;top:726px;width:88px;height:26px;border-radius:4px;background:#5b5fe8"></div><div class="a b" style="left:1223px;top:730px;width:88px;text-align:center;font-size:14px;color:#fff">Cất</div>
</body></html>
